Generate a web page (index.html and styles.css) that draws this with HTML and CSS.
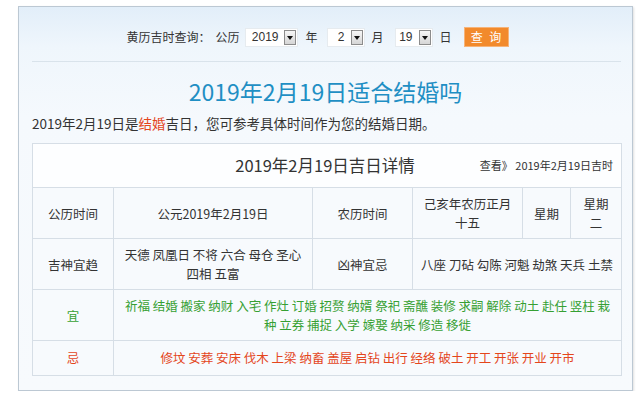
FILE: index.html
```html
<!DOCTYPE html>
<html lang="zh-CN">
<head>
<meta charset="utf-8">
<title>2019年2月19日适合结婚吗</title>
<link rel="stylesheet" href="styles.css">
</head>
<body>
<div class="box">
  <div class="query">
    <span class="lbl">黄历吉时查询：</span>
    <span class="lbl lbl-gl">公历</span>
    <span class="sel sel-y"><span class="sel-val">2019</span><span class="sel-btn"></span></span>
    <span class="unit">年</span>
    <span class="sel sel-m"><span class="sel-val">2</span><span class="sel-btn"></span></span>
    <span class="unit">月</span>
    <span class="sel sel-d"><span class="sel-val">19</span><span class="sel-btn"></span></span>
    <span class="unit">日</span>
    <span class="btn">查 询</span>
  </div>
  <div class="sep"></div>
  <h1 class="title">2019年2月19日适合结婚吗</h1>
  <p class="intro">2019年2月19日是<span class="red">结婚</span>吉日，您可参考具体时间作为您的结婚日期。</p>
  <table class="detail">
    <colgroup>
      <col class="c1"><col class="c2"><col class="c3"><col class="c4"><col class="c5"><col class="c6">
    </colgroup>
    <tr class="head">
      <td colspan="6">
        <div class="head-in">
          <span></span>
          <span class="head-title">2019年2月19日吉日详情</span>
          <span class="head-link">查看》 2019年2月19日吉时</span>
        </div>
      </td>
    </tr>
    <tr>
      <td>公历时间</td>
      <td>公元2019年2月19日</td>
      <td>农历时间</td>
      <td>己亥年农历正月<br>十五</td>
      <td>星期</td>
      <td class="narrow">星期<br>二</td>
    </tr>
    <tr>
      <td>吉神宜趋</td>
      <td>天德 凤凰日 不将 六合 母仓 圣心<br>四相 五富</td>
      <td>凶神宜忌</td>
      <td colspan="3" class="nw">八座 刀砧 勾陈 河魁 劫煞 天兵 土禁</td>
    </tr>
    <tr>
      <td class="green">宜</td>
      <td colspan="5" class="green nw tight">祈福 结婚 搬家 纳财 入宅 作灶 订婚 招赘 纳婿 祭祀 斋醮 装修 求嗣 解除 动土 赴任 竖柱 栽<br>种 立券 捕捉 入学 嫁娶 纳采 修造 移徙</td>
    </tr>
    <tr class="ji">
      <td class="red">忌</td>
      <td colspan="5" class="red nw">修坟 安葬 安床 伐木 上梁 纳畜 盖屋 启钻 出行 经络 破土 开工 开张 开业 开市</td>
    </tr>
  </table>
</div>
</body>
</html>
```

FILE: styles.css
```css
html, body {
  margin: 0;
  padding: 0;
  background: #ffffff;
}
body {
  font-family: "Noto Sans CJK SC", "Noto Sans", sans-serif;
  color: #333333;
}
.box {
  margin: 6px 0 0 18px;
  width: 613px;
  border: 1px solid #bcc8d3;
  box-shadow: 1px 1px 2px rgba(0, 0, 0, 0.12);
  background: linear-gradient(#e2eef9 0px, #eff6fc 40px, #f5f9fd 110px, #f7fafd 100%);
  padding-bottom: 14px;
}
.query {
  display: flex;
  align-items: center;
  justify-content: center;
  padding: 20px 16px 0 0;
  height: 20px;
  font-size: 12px;
  line-height: 20px;
}
.lbl-gl {
  margin-left: 5px;
}
.sel {
  display: inline-flex;
  align-items: center;
  justify-content: flex-end;
  height: 19px;
  box-sizing: border-box;
  background: #ffffff;
  border: 1px solid #e6ebef;
  margin-left: 6px;
  font-family: "Liberation Sans", sans-serif;
  font-size: 12px;
  padding-right: 1px;
}
.sel-y { width: 53px; }
.sel-m { width: 38px; margin-left: 9px; }
.sel-d { width: 38px; margin-left: 11px; }
.sel-val {
  padding-right: 6px;
}
.sel-btn {
  position: relative;
  width: 10px;
  height: 13px;
  border: 1px solid #8c8c8c;
  background: linear-gradient(#f6f6f6, #d6d6d6);
}
.sel-btn::after {
  content: "";
  position: absolute;
  left: 2px;
  top: 5px;
  border-left: 3px solid transparent;
  border-right: 3px solid transparent;
  border-top: 4px solid #111111;
}
.unit {
  margin-left: 7px;
}
.btn {
  margin-left: 12px;
  width: 45px;
  height: 20px;
  box-sizing: border-box;
  border: 1px solid #f6b378;
  background: #f28a2c;
  color: #ffffff;
  font-size: 12px;
  line-height: 18px;
  text-align: center;
  letter-spacing: 2px;
  text-indent: 2px;
}
.sep {
  margin: 14px 11px 0 13px;
  border-top: 1px solid #d9e3eb;
}
.title {
  margin: 14px 0 0 0;
  font-size: 23px;
  font-weight: normal;
  line-height: 30px;
  color: #1f8fc4;
  text-align: center;
}
.intro {
  margin: 7px 0 0 13px;
  font-size: 13.5px;
  line-height: 20px;
  color: #333333;
}
.red {
  color: #e4461c;
}
.green {
  color: #36a033;
}
.detail {
  margin: 10px 0 0 13px;
  width: 589px;
  border-collapse: collapse;
  table-layout: fixed;
  font-size: 12.5px;
  line-height: 19px;
}
.c1 { width: 81px; }
.c2 { width: 199px; }
.c3 { width: 100px; }
.c4 { width: 110px; }
.c5 { width: 48px; }
.c6 { width: 51px; }
.detail td {
  border: 1px solid #d6dee6;
  padding: 6px 4px;
  text-align: center;
  vertical-align: middle;
  background: #f7fafd;
}
.detail .head td {
  padding: 0;
  background: #fdfeff;
}
.head-in {
  display: grid;
  grid-template-columns: 1fr auto 1fr;
  align-items: center;
  height: 43px;
}
.head-title {
  font-size: 16.5px;
  color: #333333;
  padding-right: 4px;
}
.head-link {
  justify-self: end;
  font-size: 11px;
  color: #333333;
  padding-right: 8px;
}
.detail td.narrow {
  padding: 6px 8px;
}
.detail td.nw {
  white-space: nowrap;
}
.detail td.tight {
  padding-left: 0;
  padding-right: 0;
}
.detail .ji td {
  padding-top: 7px;
  padding-bottom: 8px;
}
```
